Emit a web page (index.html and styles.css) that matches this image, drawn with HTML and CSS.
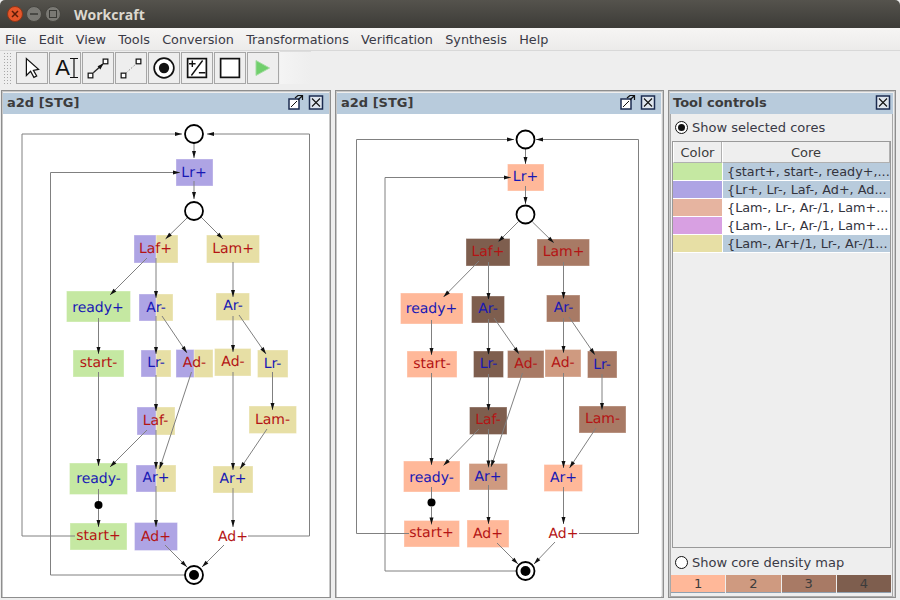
FILE: index.html
```html
<!DOCTYPE html>
<html lang="en">
<head>
    <meta charset="UTF-8">
    <title>Workcraft</title>
    <link rel="stylesheet" href="styles.css">
</head>
<body>

<div class="titlebar">
    <span class="winbtn close"><svg width="8" height="8" viewBox="0 0 8 8"><path d="M1 1L7 7M7 1L1 7" stroke="#5a1c08" stroke-width="1.5"/></svg></span>
    <span class="winbtn"><svg width="8" height="8" viewBox="0 0 8 8"><path d="M0 4H8" stroke="#3a3a36" stroke-width="1.5"/></svg></span>
    <span class="winbtn"><svg width="8" height="8" viewBox="0 0 8 8"><rect x="0.5" y="0.5" width="7" height="7" fill="none" stroke="#3a3a36"/></svg></span>
    <span class="wintitle">Workcraft</span>
</div>

<div class="menubar">
    <span>File</span><span>Edit</span><span>View</span><span>Tools</span><span>Conversion</span><span>Transformations</span><span>Verification</span><span>Synthesis</span><span>Help</span>
</div>

<div class="toolbar">
    <div class="tools">
        <div class="gripper"></div>
        <div class="toolbtn"><svg width="32" height="32" viewBox="0 0 32 32"><path d="M10 6V24L14.500 19.500L18 26L21 24.500L17.500 18.500L23 17.500Z" fill="#fff" stroke="#111" stroke-width="1.300"/></svg></div>
        <div class="toolbtn"><span class="glyph-a">A</span><svg width="10" height="22" viewBox="0 0 10 22"><path d="M1 1.500H9M5 1.500V20.500M1 20.500H9" fill="none" stroke="#111" stroke-width="1.200"/></svg></div>
        <div class="toolbtn"><svg width="32" height="32" viewBox="0 0 32 32"><rect x="5.500" y="21.500" width="5" height="5" fill="#fff" stroke="#111" stroke-width="1.300"/><rect x="21.500" y="6.500" width="5" height="5" fill="#fff" stroke="#111" stroke-width="1.300"/><path d="M11 21L21 12" stroke="#222" stroke-width="1.300"/><path d="M22 11L15.500 14L18.500 17.500Z" fill="#111"/></svg></div>
        <div class="toolbtn"><svg width="32" height="32" viewBox="0 0 32 32"><rect x="5.500" y="21.500" width="5" height="5" fill="#fff" stroke="#111" stroke-width="1.300"/><rect x="21.500" y="6.500" width="5" height="5" fill="#fff" stroke="#111" stroke-width="1.300"/><path d="M11 21L21 12" stroke="#777" stroke-dasharray="1.500 2"/></svg></div>
        <div class="toolbtn"><svg width="32" height="32" viewBox="0 0 32 32"><circle cx="16" cy="16" r="10.500" fill="#fff" stroke="#111" stroke-width="1.800"/><circle cx="16" cy="16" r="5.500" fill="#111"/></svg></div>
        <div class="toolbtn"><svg width="32" height="32" viewBox="0 0 32 32"><rect x="6" y="6" width="20" height="20" fill="#fff" stroke="#111" stroke-width="1.800"/><path d="M11 8V15M7.500 11.500H14.500M18 21H25M10 24L22 8" fill="none" stroke="#111" stroke-width="1.500"/></svg></div>
        <div class="toolbtn"><svg width="32" height="32" viewBox="0 0 32 32"><rect x="6" y="6" width="20" height="20" fill="#fff" stroke="#111" stroke-width="1.800"/></svg></div>
        <div class="toolbtn"><svg width="32" height="32" viewBox="0 0 32 32"><path d="M8.500 8V24L23 16Z" fill="#70cf6c" stroke="#a2dc9f"/></svg></div>
    </div>
    <div class="toolbar-rest"></div>
</div>

<div class="docks">

    <div class="dock dock-left">
        <div class="dock-head">
            <span class="dock-title">a2d [STG]</span>
            <svg class="dock-icon" width="16" height="15" viewBox="0 0 16 15"><rect x="1" y="4" width="10" height="10" fill="#fff" stroke="#1c2c50" stroke-width="1.500"/><path d="M3 12L9 6" stroke="#111"/><path d="M7 3L10 0.500H14.500V5M14.500 0.500L10 5" fill="none" stroke="#111" stroke-width="1.200"/></svg>
            <svg class="dock-icon" width="16" height="15" viewBox="0 0 16 15"><rect x="1.500" y="1" width="13" height="13" fill="#dfe6ee" stroke="#1c2c50" stroke-width="1.500"/><path d="M4 3.500L12 11.500M12 3.500L4 11.500" stroke="#111" stroke-width="1.100"/></svg>
        </div>
        <div class="dock-body">
            <svg class="graph" width="325" height="482" viewBox="3 114 325 482">
                <defs>
                    <marker id="tip" markerUnits="userSpaceOnUse" markerWidth="9" markerHeight="6" refX="8" refY="3" orient="auto"><path d="M1 1L8 3L1 5Z" fill="#111"/></marker>
                </defs>
                <g class="nodes">
                    <rect class="c-purple" x="176" y="159" width="37" height="27"/>
                    <rect class="c-yellow" x="156" y="235" width="22" height="28"/>
                    <rect class="c-purple" x="134" y="235" width="22" height="28"/>
                    <rect class="c-yellow" x="206.500" y="235" width="53" height="28"/>
                    <rect class="c-green" x="66.500" y="291" width="64" height="31"/>
                    <rect class="c-yellow" x="156" y="294" width="17" height="27"/>
                    <rect class="c-purple" x="139" y="294" width="17" height="27"/>
                    <rect class="c-yellow" x="216" y="293" width="33.500" height="27.500"/>
                    <rect class="c-green" x="73" y="350" width="51" height="27"/>
                    <rect class="c-yellow" x="156" y="350" width="15" height="27"/>
                    <rect class="c-purple" x="141" y="350" width="15" height="27"/>
                    <rect class="c-yellow" x="194" y="349.500" width="19" height="28"/>
                    <rect class="c-purple" x="176" y="349.500" width="18" height="28"/>
                    <rect class="c-yellow" x="214.500" y="348.500" width="36.500" height="27.500"/>
                    <rect class="c-yellow" x="257.500" y="350" width="30.500" height="27.500"/>
                    <rect class="c-yellow" x="156" y="407" width="19" height="28"/>
                    <rect class="c-purple" x="137" y="407" width="19" height="28"/>
                    <rect class="c-yellow" x="249" y="406" width="47.500" height="27.500"/>
                    <rect class="c-green" x="69.500" y="463" width="58" height="31.500"/>
                    <rect class="c-yellow" x="156" y="465" width="20" height="27"/>
                    <rect class="c-purple" x="136" y="465" width="20" height="27"/>
                    <rect class="c-yellow" x="213" y="466" width="40" height="27"/>
                    <rect class="c-green" x="70" y="523" width="57" height="27"/>
                    <rect class="c-purple" x="134.500" y="522.500" width="43" height="28"/>
                </g>
                <g class="edges">
                    <path d="M194 143V158"/>
                    <path d="M194 181V199"/>
                    <path d="M187 218L165.500 239"/>
                    <path d="M201 217L223 239"/>
                    <path d="M147 258L110 295"/>
                    <path d="M156 258V298"/>
                    <path d="M233 262V297"/>
                    <path d="M98.500 318V354"/>
                    <path d="M156 316V354"/>
                    <path d="M162 316L187 353"/>
                    <path d="M233 316V352"/>
                    <path d="M239 315L266 354"/>
                    <path d="M98.500 372V466"/>
                    <path d="M156 375V411"/>
                    <path d="M191.500 372L159.500 469"/>
                    <path d="M233 372V470"/>
                    <path d="M272.500 372V410"/>
                    <path d="M147 430L110 467"/>
                    <path d="M156 430V469"/>
                    <path d="M267 429L240 469"/>
                    <path d="M156 486V527"/>
                    <path d="M98.500 509V527"/>
                    <path d="M233 488V527"/>
                    <path d="M165 545L187 567"/>
                    <path d="M224 545L202 567"/>
                    <path d="M75 536H22V134H182"/>
                    <path d="M248 536H309.500V134H207"/>
                    <path d="M185 575H50.500V172.500H180"/>
                    <path class="bare" d="M98.500 489V501"/>
                </g>
                <g class="places">
                    <circle cx="194" cy="134" r="9"/>
                    <circle cx="194" cy="211" r="9"/>
                    <circle cx="194" cy="575" r="9"/>
                    <circle class="token" cx="194" cy="575" r="5"/>
                    <circle class="token" cx="98.500" cy="505" r="4"/>
                </g>
                <g class="labels">
                    <text class="in" x="194" y="177">Lr+</text>
                    <text class="out" x="155.500" y="253">Laf+</text>
                    <text class="out" x="233" y="253">Lam+</text>
                    <text class="in" x="98" y="312">ready+</text>
                    <text class="in" x="156" y="312">Ar-</text>
                    <text class="in" x="233" y="310">Ar-</text>
                    <text class="out" x="98.500" y="367">start-</text>
                    <text class="in" x="156" y="367">Lr-</text>
                    <text class="out" x="194.500" y="367">Ad-</text>
                    <text class="out" x="233" y="366">Ad-</text>
                    <text class="in" x="272.500" y="368">Lr-</text>
                    <text class="out" x="155.500" y="425">Laf-</text>
                    <text class="out" x="272.500" y="424">Lam-</text>
                    <text class="in" x="98.500" y="483">ready-</text>
                    <text class="in" x="156" y="482">Ar+</text>
                    <text class="in" x="233" y="483">Ar+</text>
                    <text class="out" x="98.500" y="540">start+</text>
                    <text class="out" x="156" y="541">Ad+</text>
                    <text class="out" x="233" y="541">Ad+</text>
                </g>
            </svg>
        </div>
    </div>

    <div class="dock dock-mid">
        <div class="dock-head">
            <span class="dock-title">a2d [STG]</span>
            <svg class="dock-icon" width="16" height="15" viewBox="0 0 16 15"><rect x="1" y="4" width="10" height="10" fill="#fff" stroke="#1c2c50" stroke-width="1.500"/><path d="M3 12L9 6" stroke="#111"/><path d="M7 3L10 0.500H14.500V5M14.500 0.500L10 5" fill="none" stroke="#111" stroke-width="1.200"/></svg>
            <svg class="dock-icon" width="16" height="15" viewBox="0 0 16 15"><rect x="1.500" y="1" width="13" height="13" fill="#dfe6ee" stroke="#1c2c50" stroke-width="1.500"/><path d="M4 3.500L12 11.500M12 3.500L4 11.500" stroke="#111" stroke-width="1.100"/></svg>
        </div>
        <div class="dock-body">
            <svg class="graph" width="324" height="482" viewBox="337 114 324 482">
                <g class="nodes">
                    <rect class="d1" x="507.500" y="164" width="36.500" height="27"/>
                    <rect class="d4" x="466" y="238.500" width="44" height="27.500"/>
                    <rect class="d3" x="537" y="239" width="52.500" height="27"/>
                    <rect class="d1" x="400.500" y="293" width="62.500" height="31"/>
                    <rect class="d4" x="471.500" y="296" width="33" height="27"/>
                    <rect class="d3" x="546.500" y="295" width="33.500" height="27"/>
                    <rect class="d1" x="407" y="351" width="50" height="26.500"/>
                    <rect class="d4" x="473.500" y="351" width="30" height="26.500"/>
                    <rect class="d3" x="507.500" y="350.500" width="36.500" height="27.500"/>
                    <rect class="d2" x="545" y="349.500" width="36" height="27.500"/>
                    <rect class="d3" x="587.500" y="351" width="29.500" height="27"/>
                    <rect class="d4" x="469.500" y="407" width="37.500" height="27.500"/>
                    <rect class="d3" x="579" y="406" width="47" height="27"/>
                    <rect class="d1" x="403.500" y="461" width="56.500" height="31"/>
                    <rect class="d2" x="469" y="463.500" width="38.500" height="26.500"/>
                    <rect class="d1" x="544" y="464.500" width="38.500" height="27"/>
                    <rect class="d1" x="404" y="520.500" width="55.500" height="26.500"/>
                    <rect class="d1" x="467" y="520" width="42" height="27.500"/>
                </g>
                <g class="edges">
                    <path d="M525.500 149V164"/>
                    <path d="M525.500 186V204"/>
                    <path d="M518 222L498 242"/>
                    <path d="M532.500 222L554 243"/>
                    <path d="M479 261L443.500 297"/>
                    <path d="M488.500 262V300"/>
                    <path d="M563.500 262V299"/>
                    <path d="M431.500 320V355"/>
                    <path d="M488.500 319V355"/>
                    <path d="M494 318L519 354"/>
                    <path d="M563.500 318V353"/>
                    <path d="M569 317L595 355"/>
                    <path d="M431.500 373V465"/>
                    <path d="M488.500 374V411"/>
                    <path d="M522.500 373L491 467"/>
                    <path d="M563.500 373V468"/>
                    <path d="M602 374V410"/>
                    <path d="M479 429L443.500 465.500"/>
                    <path d="M488.500 429V467.500"/>
                    <path d="M596 428L569.500 468"/>
                    <path d="M431.500 507V524.500"/>
                    <path d="M488.500 485V524"/>
                    <path d="M563.500 487V524"/>
                    <path d="M497 543L518 564"/>
                    <path d="M555 542L534 564"/>
                    <path d="M409 533.500H356.500V139.500H514"/>
                    <path d="M579 533.500H638.500V139.500H536"/>
                    <path d="M516 571H385V177.500H511"/>
                    <path class="bare" d="M431.500 487V499"/>
                </g>
                <g class="places">
                    <circle cx="525.500" cy="139.500" r="9"/>
                    <circle cx="525.500" cy="214.500" r="9"/>
                    <circle cx="525.500" cy="571" r="9"/>
                    <circle class="token" cx="525.500" cy="571" r="5"/>
                    <circle class="token" cx="431.500" cy="502.500" r="4"/>
                </g>
                <g class="labels">
                    <text class="in" x="525.500" y="181">Lr+</text>
                    <text class="out" x="488" y="256">Laf+</text>
                    <text class="out" x="563.500" y="256">Lam+</text>
                    <text class="in" x="431.500" y="313">ready+</text>
                    <text class="in" x="488" y="313">Ar-</text>
                    <text class="in" x="563.500" y="312">Ar-</text>
                    <text class="out" x="432" y="368">start-</text>
                    <text class="in" x="488.500" y="368">Lr-</text>
                    <text class="out" x="526" y="368">Ad-</text>
                    <text class="out" x="563" y="367">Ad-</text>
                    <text class="in" x="602" y="368.500">Lr-</text>
                    <text class="out" x="488" y="424">Laf-</text>
                    <text class="out" x="602.500" y="423">Lam-</text>
                    <text class="in" x="431.500" y="482">ready-</text>
                    <text class="in" x="488" y="481">Ar+</text>
                    <text class="in" x="563.500" y="481.500">Ar+</text>
                    <text class="out" x="431.500" y="537">start+</text>
                    <text class="out" x="488" y="538">Ad+</text>
                    <text class="out" x="563.500" y="538">Ad+</text>
                </g>
            </svg>
        </div>
    </div>

    <div class="dock dock-right">
        <div class="dock-head">
            <span class="dock-title">Tool controls</span>
            <svg class="dock-icon" width="16" height="15" viewBox="0 0 16 15"><rect x="1.500" y="1" width="13" height="13" fill="#dfe6ee" stroke="#1c2c50" stroke-width="1.500"/><path d="M4 3.500L12 11.500M12 3.500L4 11.500" stroke="#111" stroke-width="1.100"/></svg>
        </div>
        <div class="controls">
            <div class="radio-row">
                <span class="radio checked"></span>
                <span>Show selected cores</span>
            </div>
            <div class="table-wrap">
                <table class="cores">
                    <tr><th class="col-color">Color</th><th>Core</th></tr>
                    <tr class="selected"><td class="swatch c-green"></td><td>{start+, start-, ready+,...</td></tr>
                    <tr class="selected"><td class="swatch c-purple"></td><td>{Lr+, Lr-, Laf-, Ad+, Ad...</td></tr>
                    <tr><td class="swatch c-salmon"></td><td>{Lam-, Lr-, Ar-/1, Lam+...</td></tr>
                    <tr><td class="swatch c-violet"></td><td>{Lam-, Lr-, Ar-/1, Lam+...</td></tr>
                    <tr class="selected"><td class="swatch c-yellow"></td><td>{Lam-, Ar+/1, Lr-, Ar-/1...</td></tr>
                </table>
            </div>
            <div class="radio-row density-row">
                <span class="radio"></span>
                <span>Show core density map</span>
            </div>
            <div class="legend">
                <span class="d1">1</span>
                <span class="d2">2</span>
                <span class="d3">3</span>
                <span class="d4">4</span>
            </div>
        </div>
    </div>

</div>

</body>
</html>
```

FILE: styles.css
```css
* {
    box-sizing: border-box;
}
body {
    margin: 0;
    width: 900px;
    height: 600px;
    overflow: hidden;
    background: #eeeeee;
    font-family: "DejaVu Sans", sans-serif;
    font-size: 13px;
    color: #3c3c3c;
    display: flex;
    flex-direction: column;
}

/* window title */
.titlebar {
    height: 28px;
    flex: none;
    display: flex;
    align-items: center;
    padding: 0 0 0 7px;
    gap: 3px;
    background: linear-gradient(#55534d, #3c3b37);
    border-radius: 5px 5px 0 0;
}
.winbtn {
    width: 16px;
    height: 16px;
    border-radius: 50%;
    background: #7a7974;
    border: 1px solid #45443f;
    display: flex;
    align-items: center;
    justify-content: center;
}
.winbtn.close {
    background: #e5562a;
    border-color: #8f3517;
}
.wintitle {
    margin-left: 10px;
    font-family: "Open Sans", sans-serif;
    font-weight: 700;
    font-size: 14px;
    color: #dcd8cf;
}

/* menu */
.menubar {
    height: 23px;
    flex: none;
    display: flex;
    align-items: center;
    gap: 12.25px;
    padding: 0 0 0 5px;
    background: linear-gradient(#f6f5f4, #ecebea);
    border-bottom: 1px solid #d8d8d8;
    font-size: 12.8px;
    color: #3a3a46;
}

/* toolbar */
.toolbar {
    height: 38px;
    flex: none;
    display: flex;
}
.tools {
    display: flex;
    gap: 1px;
    align-items: flex-start;
    padding: 1px 1px 0 3px;
    height: 35px;
}
.gripper {
    width: 10px;
    height: 32px;
    margin-right: 2px;
    background-image: radial-gradient(#a8a8a8 0.7px, transparent 0.8px);
    background-size: 3px 3px;
}
.toolbtn {
    width: 32px;
    height: 32px;
    border: 1px solid #a6a6a6;
    background: #eeeeee;
    display: flex;
    align-items: center;
    justify-content: center;
    overflow: hidden;
}
.glyph-a {
    font-family: "Liberation Sans", sans-serif;
    font-size: 22px;
    color: #111;
    margin: 0 -1px 0 4px;
}
.toolbar-rest {
    width: 31px;
    height: 33px;
    background: linear-gradient(90deg, #f4f4f4, #eeeeee);
    border-top: 1px solid #dddddd;
}

/* docks */
.docks {
    flex: 1;
    min-height: 0;
    display: flex;
    gap: 4px;
    padding: 1px 0 2px 1px;
}
.dock {
    border: 1px solid #8e8e8e;
    padding: 2px 1px 0 1px;
    background: #eeeeee;
    display: flex;
    flex-direction: column;
    box-shadow: inset 0 0 0 1px #c8c8c8;
}
.dock-left {
    width: 330px;
}
.dock-mid {
    width: 329px;
    padding-right: 2px;
}
.dock-right {
    width: 228px;
    padding-right: 2px;
}
.dock-head {
    height: 21px;
    flex: none;
    display: flex;
    align-items: center;
    gap: 4px;
    padding: 0 5px 0 4px;
    background: #b8cbdc;
}
.dock-right .dock-head {
    padding: 0 2px 0 3px;
}
.dock-title {
    flex: 1;
    font-weight: bold;
    color: #3c3c3c;
    margin-bottom: 2px;
}
.dock-icon {
    margin-bottom: 2px;
}
.dock-body {
    flex: 1;
    min-height: 0;
    background: #ffffff;
}

/* stg graphs */
.graph {
    display: block;
}
.nodes rect {
    stroke: #ffffff;
    stroke-opacity: 0.35;
}
.edges path {
    fill: none;
    stroke: #808080;
    stroke-width: 1;
    marker-end: url(#tip);
}
.edges path.bare {
    marker-end: none;
}
.places circle {
    fill: #ffffff;
    stroke: #000000;
    stroke-width: 1.800;
}
.places circle.token {
    fill: #000000;
    stroke: none;
}
.labels text {
    font-size: 14px;
    text-anchor: middle;
    text-rendering: geometricPrecision;
}
.labels .in {
    fill: #1818b4;
}
.labels .out {
    fill: #b41414;
}

/* core colours */
.c-green {
    fill: #c5e8a2;
}
.c-purple {
    fill: #aea4e4;
}
.c-yellow {
    fill: #e7dfa5;
}
.d1 {
    fill: #ffb899;
    background: #ffb899;
}
.d2 {
    fill: #cf9a80;
    background: #cf9a80;
}
.d3 {
    fill: #a87a65;
    background: #a87a65;
}
.d4 {
    fill: #7e5e4e;
    background: #7e5e4e;
}

/* tool controls */
.controls {
    flex: 1;
    min-height: 0;
    border: 1px solid #a8a8a8;
    border-top: none;
    display: flex;
    flex-direction: column;
    padding: 0 1px 4px 0;
}
.radio-row {
    height: 27px;
    flex: none;
    display: flex;
    align-items: center;
    gap: 4px;
    padding-left: 4px;
    color: #3a3a46;
}
.density-row {
    padding-top: 2px;
}
.radio {
    width: 13px;
    height: 13px;
    border-radius: 50%;
    border: 1.500px solid #111;
    background: #fff;
    display: flex;
    align-items: center;
    justify-content: center;
}
.radio.checked::after {
    content: "";
    width: 7px;
    height: 7px;
    border-radius: 50%;
    background: #111;
}
.table-wrap {
    flex: 1;
    min-height: 0;
    margin: 0 0 0 1px;
    border: 1px solid #999999;
}
.cores {
    width: 100%;
    table-layout: fixed;
    border-collapse: separate;
    border-spacing: 0;
}
.cores th {
    height: 21px;
    padding: 0;
    font-weight: normal;
    background: #eeeeee;
    border-right: 1px solid #b0b0b0;
    border-left: 1px solid #ffffff;
    border-bottom: 1px solid #b0b0b0;
    color: #3c3c3c;
}
.cores .col-color {
    width: 49px;
}
.cores td {
    height: 18px;
    padding: 0 0 0 4px;
    background: #fff;
    white-space: nowrap;
    overflow: hidden;
    font-size: 12.8px;
    border-bottom: 1px solid #fff;
    border-left: 1px solid #fff;
    color: #33333d;
}
.cores .selected td {
    background: #b8cbdc;
}
.cores td.swatch {
    padding: 0;
    border-left: none;
}
.cores td.c-green,
.cores .selected td.c-green {
    background: #c5e8a2;
}
.cores td.c-purple,
.cores .selected td.c-purple {
    background: #aea4e4;
}
.cores td.c-salmon {
    background: #e6b4a0;
}
.cores td.c-violet {
    background: #d8a0e2;
}
.cores td.c-yellow,
.cores .selected td.c-yellow {
    background: #e7dfa5;
}
.legend {
    height: 17px;
    flex: none;
    display: grid;
    grid-template-columns: repeat(4, 1fr);
    gap: 1px;
}
.legend span {
    text-align: center;
    line-height: 17px;
    color: #3c3c3c;
    border-bottom: 1px solid #8fa0b0;
}
```
